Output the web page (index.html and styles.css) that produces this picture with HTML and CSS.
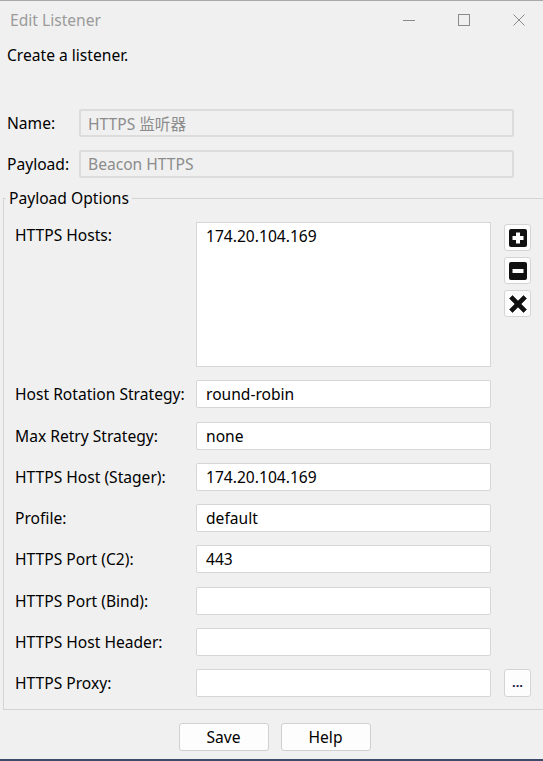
FILE: index.html
```html
<!DOCTYPE html>
<html>
<head>
<meta charset="utf-8">
<link rel="stylesheet" href="styles.css">
</head>
<body>
<div class="window">
  <div class="titlebar">
    <span class="title">Edit Listener</span>
    <div class="controls">
      <svg width="12" height="12" viewBox="0 0 12 12"><line x1="0" y1="6.5" x2="12" y2="6.5" stroke="#8a8a8a" stroke-width="1"/></svg>
      <svg width="12" height="12" viewBox="0 0 12 12"><rect x="0.5" y="0.5" width="11" height="11" fill="none" stroke="#8a8a8a" stroke-width="1"/></svg>
      <svg width="12" height="12" viewBox="0 0 12 12"><path d="M0.5 0.5 L11.5 11.5 M11.5 0.5 L0.5 11.5" stroke="#8a8a8a" stroke-width="1"/></svg>
    </div>
  </div>
  <p class="desc">Create a listener.</p>
  <div class="top-form">
    <div class="row"><label>Name:</label><input class="field disabled" value="HTTPS 监听器" disabled></div>
    <div class="row"><label>Payload:</label><input class="field disabled" value="Beacon HTTPS" disabled></div>
  </div>
  <fieldset class="group">
    <legend>Payload Options</legend>
    <div class="grid">
      <label class="lbl lbl-top">HTTPS Hosts:</label>
      <div class="hosts">174.20.104.169</div>
      <div class="side">
        <button class="icon-btn"><svg width="20" height="20" viewBox="0 0 20 20"><rect x="1" y="1" width="18" height="18" rx="2" fill="#111"/><path d="M8 4.5h4v3.5h3.5v4H12v3.5H8V12H4.5V8H8z" fill="#fff"/></svg></button>
        <button class="icon-btn"><svg width="20" height="20" viewBox="0 0 20 20"><rect x="1" y="1" width="18" height="18" rx="2" fill="#111"/><rect x="4.5" y="8" width="11" height="4" fill="#fff"/></svg></button>
        <button class="icon-btn"><svg width="20" height="20" viewBox="0 0 20 20"><path d="M1.5 4.5 L4.5 1.5 L10 7 L15.5 1.5 L18.5 4.5 L13 10 L18.5 15.5 L15.5 18.5 L10 13 L4.5 18.5 L1.5 15.5 L7 10 Z" fill="#111" stroke="#111" stroke-width="0.6" stroke-linejoin="round"/></svg></button>
      </div>

      <label class="lbl">Host Rotation Strategy:</label>
      <input class="field" value="round-robin"><span></span>

      <label class="lbl">Max Retry Strategy:</label>
      <input class="field" value="none"><span></span>

      <label class="lbl">HTTPS Host (Stager):</label>
      <input class="field" value="174.20.104.169"><span></span>

      <label class="lbl">Profile:</label>
      <input class="field" value="default"><span></span>

      <label class="lbl">HTTPS Port (C2):</label>
      <input class="field" value="443"><span></span>

      <label class="lbl">HTTPS Port (Bind):</label>
      <input class="field" value=""><span></span>

      <label class="lbl">HTTPS Host Header:</label>
      <input class="field" value=""><span></span>

      <label class="lbl">HTTPS Proxy:</label>
      <input class="field" value="">
      <button class="icon-btn dots">...</button>
    </div>
  </fieldset>
  <div class="actions">
    <button class="btn">Save</button>
    <button class="btn">Help</button>
  </div>
</div>
</body>
</html>
```

FILE: styles.css
```css
html, body {
  margin: 0;
  padding: 0;
  background: #f0f0f0;
}
body {
  width: 543px;
  height: 761px;
  overflow: hidden;
  font-family: "Noto Sans", "Noto Sans CJK SC", sans-serif;
  font-size: 15.6px;
  color: #000;
}
.window {
  box-sizing: border-box;
  height: 761px;
  border-top: 1px solid #a9a9a9;
  border-bottom: 2px solid #3d4a6a;
  display: flex;
  flex-direction: column;
}
.titlebar {
  height: 37px;
  display: flex;
  align-items: center;
  padding-left: 10px;
  padding-top: 1px;
  box-sizing: border-box;
}
.title {
  color: #9a9a9a;
  font-size: 15.6px;
}
.controls {
  margin-left: auto;
  display: flex;
  gap: 43px;
  padding-right: 18px;
}
.controls svg { display: block; }
.desc {
  margin: 7px 0 0 7px;
  line-height: 20px;
}
.top-form {
  margin-top: 44px;
  display: flex;
  flex-direction: column;
  gap: 13px;
}
.row {
  display: flex;
  align-items: center;
  padding-left: 7px;
}
.row label {
  width: 72px;
  white-space: nowrap;
}
.field {
  box-sizing: border-box;
  height: 28px;
  border: 1px solid #d6d6d6;
  border-radius: 2px;
  background: #fff;
  font: inherit;
  color: #000;
  padding: 0 9px;
  outline: none;
}
.row .field {
  width: 435px;
}
.field.disabled {
  background: #f0f0f0;
  border: 2px solid #dcdcdc;
  color: #8c8c8c;
  padding-left: 7px;
  -webkit-text-fill-color: #8c8c8c;
}
.group {
  margin: 10px -10px 0 3px;
  border: 1px solid #d4d4d4;
  padding: 14px 0 12px 11px;
}
.group legend {
  padding: 0 3px;
  margin-left: -9px;
  line-height: 20px;
}
.grid {
  display: grid;
  grid-template-columns: 168px 295px 27px;
  column-gap: 13px;
  row-gap: 13.3px;
  align-items: center;
}
.lbl {
  line-height: 20px;
  white-space: nowrap;
}
.lbl-top {
  align-self: start;
  padding-top: 3px;
}
.hosts {
  box-sizing: border-box;
  height: 145px;
  background: #fff;
  border: 1px solid #d6d6d6;
  padding: 3px 9px;
  line-height: 20px;
  align-self: start;
}
.side {
  align-self: start;
  display: flex;
  flex-direction: column;
  gap: 6px;
  padding-top: 2px;
}
.icon-btn {
  box-sizing: border-box;
  width: 27px;
  height: 27px;
  padding: 0;
  border: 1px solid #d4d4d4;
  border-radius: 3px;
  background: #fdfdfd;
  display: flex;
  align-items: center;
  justify-content: center;
}
.icon-btn svg { display: block; }
.dots {
  height: 28px;
  font-family: "Noto Sans", sans-serif;
  font-size: 13px;
  font-weight: bold;
  line-height: 1;
  padding-bottom: 2px;
  color: #1a1a4a;
}
.actions {
  display: flex;
  justify-content: center;
  gap: 12px;
  margin-top: 13px;
  padding-left: 6px;
}
.btn {
  box-sizing: border-box;
  width: 90px;
  height: 28px;
  border: 1px solid #d0d0d0;
  border-radius: 3px;
  background: #fdfdfd;
  font-family: "Noto Sans", sans-serif;
  font-size: 15.6px;
  color: #000;
  padding: 0;
}
```
